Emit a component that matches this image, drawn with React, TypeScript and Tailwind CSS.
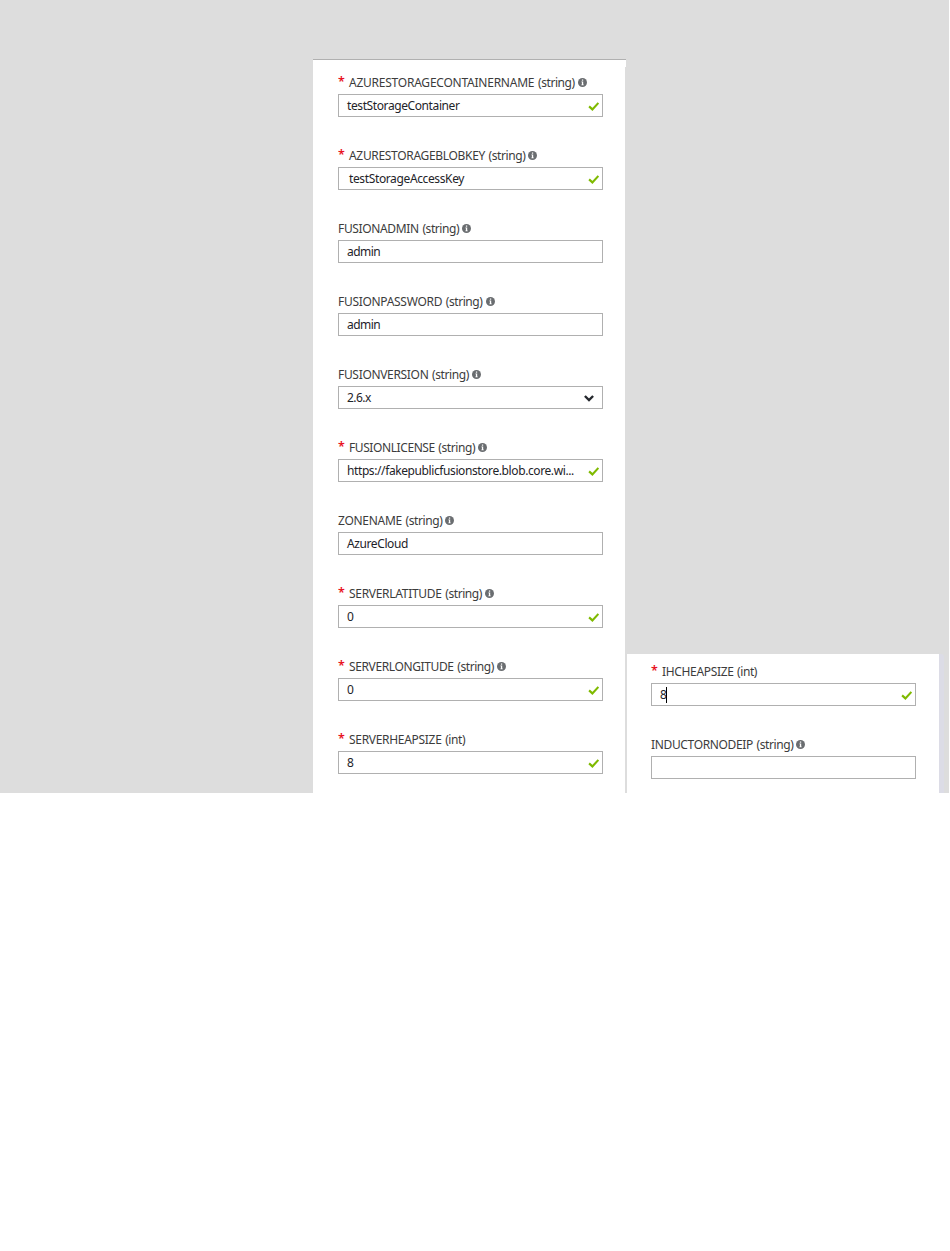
import type { ReactNode } from "react";

type FieldProps = {
  name: string;
  type?: string;
  value?: string;
  required?: boolean;
  info?: boolean;
  trailing?: "check" | "chevron";
  labelClass?: string;
  valueClass?: string;
  caret?: boolean;
};

function InfoIcon() {
  return (
    <svg className="ml-[3px] size-[9px] shrink-0" viewBox="0 0 9 9">
      <circle cx="4.5" cy="4.5" r="4.5" fill="#6a6d70" />
      <rect x="3.9" y="1.5" width="1.3" height="1.2" fill="#fff" />
      <path d="M3.4 3.5H5.2V6.5H5.7V7.3H3.4V6.5H3.9V4.3H3.4Z" fill="#fff" />
    </svg>
  );
}

function CheckIcon() {
  return (
    <svg className="mt-px mr-[3px] h-[9px] w-[11px] shrink-0" viewBox="0 0 11 9">
      <path d="M1.1 4.4L4.4 7.4L10.4 0.9" fill="none" stroke="#7fba00" strokeWidth="2.1" />
    </svg>
  );
}

function ChevronIcon() {
  return (
    <svg className="mt-0.5 mr-2 h-[7px] w-[10px] shrink-0" viewBox="0 0 10 7">
      <path d="M0.9 1L5 5L9.1 1" fill="none" stroke="#25282d" strokeWidth="2.4" />
    </svg>
  );
}

function Field({
  name,
  type = "string",
  value,
  required,
  info = true,
  trailing,
  labelClass = "tracking-[-0.3px]",
  valueClass = "",
  caret,
}: FieldProps) {
  return (
    <div className="h-[73px] w-[265px]">
      <div className="flex h-[23px] items-center text-[12px] leading-[23px] whitespace-nowrap text-[#3c3c3c]">
        {required && <span className="-mt-0.5 h-[23px] w-[11px] shrink-0 text-[12.5px] font-semibold text-[#e81123]">*</span>}
        <span className={labelClass}>
          {name} <span className="ml-[0.8px] tracking-[-0.42px]">({type})</span>
        </span>
        {info && <InfoIcon />}
      </div>
      <div className="flex h-[23px] items-center border border-[#b0b0b0] bg-white pl-2 text-[12px] leading-[21px] whitespace-nowrap text-[#1e2329]">
        <span className={valueClass}>{value}</span>
        {caret && <span className="-ml-px h-4 w-px bg-black" />}
        <span className="flex-1" />
        {trailing === "check" && <CheckIcon />}
        {trailing === "chevron" && <ChevronIcon />}
      </div>
    </div>
  );
}

function Panel({ className, children }: { className: string; children: ReactNode }) {
  return <section className={`overflow-hidden bg-white ${className}`}>{children}</section>;
}

export default function App() {
  return (
    <div className="min-h-[1251px] bg-white font-['Noto_Sans','Open_Sans',sans-serif]">
      <main className="flex h-[793px] w-[949px] overflow-hidden bg-[#dddddd] pl-[313px]">
        <div className="flex w-[313px] shrink-0 flex-col pt-[59px]">
          <div className="h-2 border-t border-[#b0b0b0] bg-white" />
          <Panel className="w-[312px] flex-1 pt-1 pl-[25px]">
            <Field required name="AZURESTORAGECONTAINERNAME" labelClass="tracking-[-0.235px]" value="testStorageContainer" valueClass="tracking-[-0.4px]" trailing="check" />
            <Field required name="AZURESTORAGEBLOBKEY" labelClass="tracking-[-0.32px]" value="testStorageAccessKey" valueClass="ml-0.5 tracking-[-0.37px]" trailing="check" />
            <Field name="FUSIONADMIN" labelClass="tracking-[-0.35px]" value="admin" valueClass="tracking-[-0.55px]" />
            <Field name="FUSIONPASSWORD" labelClass="tracking-[-0.3px]" value="admin" valueClass="tracking-[-0.55px]" />
            <Field name="FUSIONVERSION" labelClass="tracking-[-0.32px]" value="2.6.x" valueClass="tracking-[-0.55px]" trailing="chevron" />
            <Field required name="FUSIONLICENSE" labelClass="tracking-[-0.41px]" value="https://fakepublicfusionstore.blob.core.wi..." valueClass="tracking-[-0.4px]" trailing="check" />
            <Field name="ZONENAME" labelClass="tracking-[-0.29px]" value="AzureCloud" valueClass="tracking-[-0.4px]" />
            <Field required name="SERVERLATITUDE" labelClass="tracking-[-0.3px]" value="0" trailing="check" />
            <Field required name="SERVERLONGITUDE" labelClass="tracking-[-0.375px]" value="0" trailing="check" />
            <Field required name="SERVERHEAPSIZE" type="int" value="8" info={false} trailing="check" />
          </Panel>
        </div>
        <div className="flex pt-[654px] pl-px">
          <Panel className="w-[312px] pt-[6px] pl-6">
            <Field required name="IHCHEAPSIZE" type="int" labelClass="tracking-[-0.34px]" value="8" info={false} caret trailing="check" />
            <Field name="INDUCTORNODEIP" labelClass="tracking-[-0.35px]" />
          </Panel>
          <div className="w-[5px] rounded-tr-[3px] bg-[#dcdce6]" />
        </div>
      </main>
    </div>
  );
}
